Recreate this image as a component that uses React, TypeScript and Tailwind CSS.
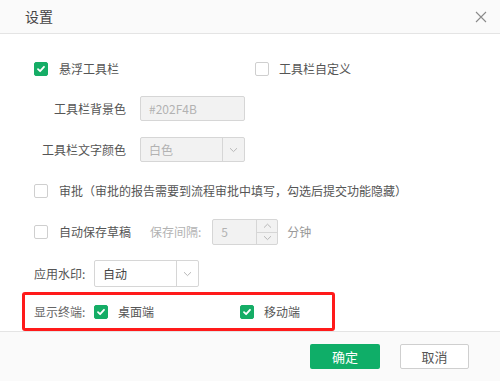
import type React from 'react';

const GREEN = 'bg-[#15ad66] border-[#15ad66]';

const Check: React.FC<{ checked?: boolean }> = ({ checked }) =>
  checked ? (
    <span className={`flex h-[14px] w-[14px] items-center justify-center rounded-[2px] border ${GREEN}`}>
      <svg width="10" height="10" viewBox="0 0 10 10">
        <path d="M2 5.2 4.1 7.2 8 2.8" fill="none" stroke="#fff" strokeWidth="1.8" strokeLinecap="round" strokeLinejoin="round" />
      </svg>
    </span>
  ) : (
    <span className="block h-[14px] w-[14px] rounded-[2px] border border-[#cfcfcf] bg-white" />
  );

const Chevron: React.FC = () => (
  <svg width="9" height="6" viewBox="0 0 9 6">
    <path d="M1 1.2 4.5 4.6 8 1.2" fill="none" stroke="#b8b8b8" strokeWidth="1" />
  </svg>
);

const SelectBox: React.FC<{ value: string; disabled?: boolean; width: string; h: string }> = ({ value, disabled, width, h }) => (
  <div
    className={`flex ${width} ${h} items-stretch rounded-[2px] border border-[#d6d6d6] ${
      disabled ? 'bg-[#f2f2f2] text-[#b2b2b2]' : 'bg-white text-[#444]'
    }`}
  >
    <span className="flex flex-1 items-center pl-[8px]">{value}</span>
    <span className="flex w-[22px] items-center justify-center border-l border-[#d6d6d6]">
      <Chevron />
    </span>
  </div>
);

export default function App() {
  return (
    <div
      className="flex h-[381px] w-[500px] flex-col bg-white text-[12px] text-[#555]"
      style={{ fontFamily: '"Microsoft YaHei", "Noto Sans CJK SC", "Noto Sans", sans-serif' }}
    >
      <div className="flex h-[34px] shrink-0 items-center justify-between border-b border-[#e4e4e4] bg-[#fafafa] pl-[25px] pr-[13px]">
        <span className="text-[14px] text-[#444]">设置</span>
        <svg width="12" height="12" viewBox="0 0 12 12">
          <path d="M1 1 11 11M11 1 1 11" stroke="#8a8a8a" strokeWidth="1.1" />
        </svg>
      </div>

      <div className="flex flex-1 flex-col pl-[34px] pt-[25px]">
        <div className="flex h-5 items-center">
          <div className="flex w-[221px] items-center gap-[11px]">
            <Check checked />
            <span>悬浮工具栏</span>
          </div>
          <div className="flex items-center gap-[10px]">
            <Check />
            <span>工具栏自定义</span>
          </div>
        </div>

        <div className="mt-[17px] flex h-[25px] items-center">
          <span className="w-[92px] text-right">工具栏背景色</span>
          <div className="ml-[14px] flex h-[25px] w-[105px] items-center rounded-[2px] border border-[#d6d6d6] bg-[#f2f2f2] pl-[8px] text-[#b2b2b2]">
            #202F4B
          </div>
        </div>

        <div className="mt-4 flex h-[25px] items-center">
          <span className="w-[92px] text-right">工具栏文字颜色</span>
          <div className="ml-[14px]">
            <SelectBox value="白色" disabled width="w-[105px]" h="h-[25px]" />
          </div>
        </div>

        <div className="mt-[19px] flex h-5 items-center gap-[11px]">
          <Check />
          <span>审批（审批的报告需要到流程审批中填写，勾选后提交功能隐藏）</span>
        </div>

        <div className="mt-[18px] flex h-[26px] items-center">
          <Check />
          <span className="ml-[11px]">自动保存草稿</span>
          <span className="ml-[19px] text-[#b2b2b2]">保存间隔:</span>
          <div className="ml-[11px] flex h-[26px] w-[66px] rounded-[2px] border border-[#d6d6d6] bg-[#f2f2f2] text-[#b2b2b2]">
            <span className="flex flex-1 items-center pl-[8px]">5</span>
            <div className="flex w-[21px] flex-col border-l border-[#d6d6d6]">
              <span className="flex flex-1 items-center justify-center border-b border-[#d6d6d6]">
                <svg width="9" height="6" viewBox="0 0 9 6">
                  <path d="M1 4.6 4.5 1.2 8 4.6" fill="none" stroke="#b8b8b8" strokeWidth="1" />
                </svg>
              </span>
              <span className="flex flex-1 items-center justify-center">
                <Chevron />
              </span>
            </div>
          </div>
          <span className="ml-[9px] text-[#999]">分钟</span>
        </div>

        <div className="mt-[15px] flex h-[27px] items-center">
          <span className="w-[60px]">应用水印:</span>
          <SelectBox value="自动" width="w-[105px]" h="h-[27px]" />
        </div>

        <div className="-ml-3 mt-[5px] flex h-[39px] w-[313px] items-center rounded-[3px] border-[3px] border-[#ff1a1a] pl-[9px]">
          <span className="w-[60px] text-[#666]">显示终端:</span>
          <div className="flex w-[146px] items-center gap-[10px]">
            <Check checked />
            <span>桌面端</span>
          </div>
          <div className="flex items-center gap-[10px]">
            <Check checked />
            <span>移动端</span>
          </div>
        </div>
      </div>

      <div className="flex h-[50px] shrink-0 items-center justify-end gap-[20px] border-t border-[#e4e4e4] bg-[#fafafa] pr-[31px]">
        <button className="flex h-[25px] w-[70px] items-center justify-center rounded-[2px] bg-[#0fae68] text-[13px] text-white">
          确定
        </button>
        <button className="flex h-[25px] w-[69px] items-center justify-center rounded-[2px] border border-[#cfcfcf] bg-white text-[13px] text-[#555]">
          取消
        </button>
      </div>
    </div>
  );
}
